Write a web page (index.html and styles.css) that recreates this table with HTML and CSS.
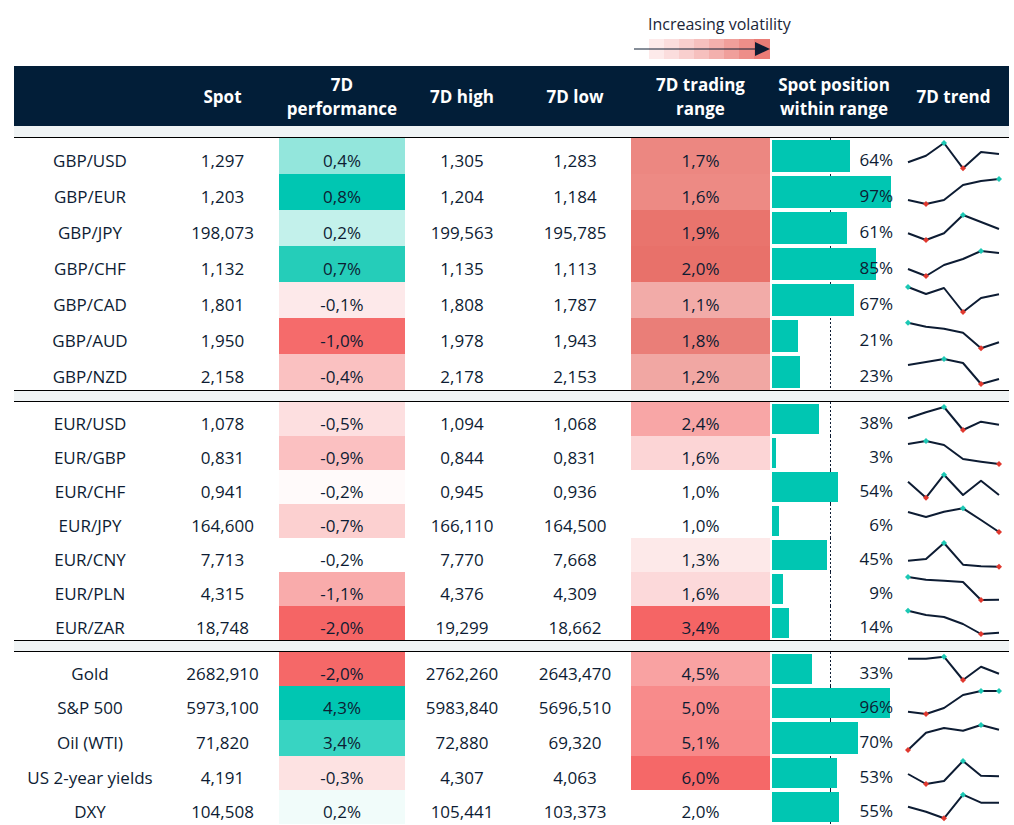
FILE: index.html
```html
<!DOCTYPE html>
<html lang="en">
<head>
<meta charset="utf-8">
<title>FX volatility monitor</title>
<link rel="stylesheet" href="styles.css">
</head>
<body>
<div class="page">
  <div class="legend">
    <div class="legend-label">Increasing volatility</div>
    <svg class="legend-arrow" width="136" height="20" viewBox="0 0 136 20">
      <rect x="15" y="0" width="15.2" height="20" fill="#fdeaea"/>
      <rect x="30" y="0" width="15.2" height="20" fill="#fbdddd"/>
      <rect x="45" y="0" width="15.2" height="20" fill="#f9cfce"/>
      <rect x="60" y="0" width="15.2" height="20" fill="#f6c0be"/>
      <rect x="75" y="0" width="15.2" height="20" fill="#f3b0ad"/>
      <rect x="90" y="0" width="15.2" height="20" fill="#f09f9b"/>
      <rect x="105" y="0" width="15.2" height="20" fill="#ed8e89"/>
      <rect x="120" y="0" width="16" height="20" fill="#ea7c76"/>
      <line x1="0" y1="10" x2="122" y2="10" stroke="#0d1c33" stroke-width="1"/>
      <polygon points="121,3 136,10 121,17" fill="#0d1c33"/>
    </svg>
  </div>

  <div class="board">
    <div class="grid head">
      <div class="hc"></div>
      <div class="hc">Spot</div>
      <div class="hc">7D<br>performance</div>
      <div class="hc">7D high</div>
      <div class="hc">7D low</div>
      <div class="hc">7D trading<br>range</div>
      <div class="hc">Spot position<br>within range</div>
      <div class="hc">7D trend</div>
    </div>
    <div class="band band-first"></div>

    <section class="group tall">
      <div class="grid row">
        <div class="c">GBP/USD</div><div class="c">1,297</div>
        <div class="c" style="background:#93e6dc">0,4%</div>
        <div class="c">1,305</div><div class="c">1,283</div>
        <div class="c" style="background:#ec8781">1,7%</div>
        <div class="pos"><div class="bar" style="width:78.3px"></div><span class="pct">64%</span></div>
        <div class="trend"><svg class="spark" viewBox="0 0 111 36"><polyline points="10,24.3 28,17.7 46,5 65,30.3 83,14 101,16"/><path class="hi" d="M46 2l3 3-3 3-3-3z"/><path class="lo" d="M65 27.3l3 3-3 3-3-3z"/></svg></div>
      </div>
      <div class="grid row">
        <div class="c">GBP/EUR</div><div class="c">1,203</div>
        <div class="c" style="background:#00c6b2">0,8%</div>
        <div class="c">1,204</div><div class="c">1,184</div>
        <div class="c" style="background:#ed8a84">1,6%</div>
        <div class="pos"><div class="bar" style="width:118.7px"></div><span class="pct">97%</span></div>
        <div class="trend"><svg class="spark" viewBox="0 0 111 36"><polyline points="10,26 28,30 46,26 65,11 83,7 101,5"/><path class="lo" d="M28 27l3 3-3 3-3-3z"/><path class="hi" d="M101 2l3 3-3 3-3-3z"/></svg></div>
      </div>
      <div class="grid row">
        <div class="c">GBP/JPY</div><div class="c">198,073</div>
        <div class="c" style="background:#c3f1eb">0,2%</div>
        <div class="c">199,563</div><div class="c">195,785</div>
        <div class="c" style="background:#e9746d">1,9%</div>
        <div class="pos"><div class="bar" style="width:74.7px"></div><span class="pct">61%</span></div>
        <div class="trend"><svg class="spark" viewBox="0 0 111 36"><polyline points="10,23.3 28,30 46,23.3 65,5 83,12 101,19"/><path class="lo" d="M28 27l3 3-3 3-3-3z"/><path class="hi" d="M65 2l3 3-3 3-3-3z"/></svg></div>
      </div>
      <div class="grid row">
        <div class="c">GBP/CHF</div><div class="c">1,132</div>
        <div class="c" style="background:#25cdb9">0,7%</div>
        <div class="c">1,135</div><div class="c">1,113</div>
        <div class="c" style="background:#e8716a">2,0%</div>
        <div class="pos"><div class="bar" style="width:104px"></div><span class="pct">85%</span></div>
        <div class="trend"><svg class="spark" viewBox="0 0 111 36"><polyline points="10,23 28,30 46,19 65,13 83,5 101,7"/><path class="lo" d="M28 27l3 3-3 3-3-3z"/><path class="hi" d="M83 2l3 3-3 3-3-3z"/></svg></div>
      </div>
      <div class="grid row">
        <div class="c">GBP/CAD</div><div class="c">1,801</div>
        <div class="c" style="background:#fde9ea">-0,1%</div>
        <div class="c">1,808</div><div class="c">1,787</div>
        <div class="c" style="background:#f2aba8">1,1%</div>
        <div class="pos"><div class="bar" style="width:82px"></div><span class="pct">67%</span></div>
        <div class="trend"><svg class="spark" viewBox="0 0 111 36"><polyline points="10,5 28,12 46,6 65,30 83,16 101,12.3"/><path class="hi" d="M10 2l3 3-3 3-3-3z"/><path class="lo" d="M65 27l3 3-3 3-3-3z"/></svg></div>
      </div>
      <div class="grid row">
        <div class="c">GBP/AUD</div><div class="c">1,950</div>
        <div class="c" style="background:#f56b6b">-1,0%</div>
        <div class="c">1,978</div><div class="c">1,943</div>
        <div class="c" style="background:#ea7e78">1,8%</div>
        <div class="pos"><div class="bar" style="width:25.7px"></div><span class="pct">21%</span></div>
        <div class="trend"><svg class="spark" viewBox="0 0 111 36"><polyline points="10,4.7 28,8.7 46,10.7 65,14.7 83,30.3 101,24.3"/><path class="hi" d="M10 1.7l3 3-3 3-3-3z"/><path class="lo" d="M83 27.3l3 3-3 3-3-3z"/></svg></div>
      </div>
      <div class="grid row">
        <div class="c">GBP/NZD</div><div class="c">2,158</div>
        <div class="c" style="background:#fac1c1">-0,4%</div>
        <div class="c">2,178</div><div class="c">2,153</div>
        <div class="c" style="background:#f1a7a3">1,2%</div>
        <div class="pos"><div class="bar" style="width:28.2px"></div><span class="pct">23%</span></div>
        <div class="trend"><svg class="spark" viewBox="0 0 111 36"><polyline points="10,11 28,8 46,5 65,9 83,30 101,25"/><path class="hi" d="M46 2l3 3-3 3-3-3z"/><path class="lo" d="M83 27l3 3-3 3-3-3z"/></svg></div>
      </div>
    </section>

    <div class="band"></div>

    <section class="group">
      <div class="grid row">
        <div class="c">EUR/USD</div><div class="c">1,078</div>
        <div class="c" style="background:#fddfe0">-0,5%</div>
        <div class="c">1,094</div><div class="c">1,068</div>
        <div class="c" style="background:#f8a6a6">2,4%</div>
        <div class="pos"><div class="bar" style="width:46.5px"></div><span class="pct">38%</span></div>
        <div class="trend"><svg class="spark" viewBox="0 0 111 34"><polyline points="10,16.3 28,10.3 46,5 65,28 83,19.7 101,22.7"/><path class="hi" d="M46 2l3 3-3 3-3-3z"/><path class="lo" d="M65 25l3 3-3 3-3-3z"/></svg></div>
      </div>
      <div class="grid row">
        <div class="c">EUR/GBP</div><div class="c">0,831</div>
        <div class="c" style="background:#fbc0c1">-0,9%</div>
        <div class="c">0,844</div><div class="c">0,831</div>
        <div class="c" style="background:#fcd5d6">1,6%</div>
        <div class="pos"><div class="bar" style="width:3.7px"></div><span class="pct">3%</span></div>
        <div class="trend"><svg class="spark" viewBox="0 0 111 34"><polyline points="10,8 28,5 46,9 65,23 83,25.7 101,28"/><path class="hi" d="M28 2l3 3-3 3-3-3z"/><path class="lo" d="M101 25l3 3-3 3-3-3z"/></svg></div>
      </div>
      <div class="grid row">
        <div class="c">EUR/CHF</div><div class="c">0,941</div>
        <div class="c" style="background:#fffafa">-0,2%</div>
        <div class="c">0,945</div><div class="c">0,936</div>
        <div class="c">1,0%</div>
        <div class="pos"><div class="bar" style="width:66.1px"></div><span class="pct">54%</span></div>
        <div class="trend"><svg class="spark" viewBox="0 0 111 34"><polyline points="10,11.7 28,27.7 46,4.7 65,25 83,10.7 101,25"/><path class="hi" d="M46 1.7l3 3-3 3-3-3z"/><path class="lo" d="M28 24.7l3 3-3 3-3-3z"/></svg></div>
      </div>
      <div class="grid row">
        <div class="c">EUR/JPY</div><div class="c">164,600</div>
        <div class="c" style="background:#fcd0d0">-0,7%</div>
        <div class="c">166,110</div><div class="c">164,500</div>
        <div class="c">1,0%</div>
        <div class="pos"><div class="bar" style="width:7.3px"></div><span class="pct">6%</span></div>
        <div class="trend"><svg class="spark" viewBox="0 0 111 34"><polyline points="10,8 28,13 46,7.7 65,4.3 83,16 101,28"/><path class="hi" d="M65 1.3l3 3-3 3-3-3z"/><path class="lo" d="M101 25l3 3-3 3-3-3z"/></svg></div>
      </div>
      <div class="grid row">
        <div class="c">EUR/CNY</div><div class="c">7,713</div>
        <div class="c">-0,2%</div>
        <div class="c">7,770</div><div class="c">7,668</div>
        <div class="c" style="background:#fde9e9">1,3%</div>
        <div class="pos"><div class="bar" style="width:55.1px"></div><span class="pct">45%</span></div>
        <div class="trend"><svg class="spark" viewBox="0 0 111 34"><polyline points="10,22.7 28,21 46,5 65,26.7 83,28.3 101,28.7"/><path class="hi" d="M46 2l3 3-3 3-3-3z"/><path class="lo" d="M101 25.7l3 3-3 3-3-3z"/></svg></div>
      </div>
      <div class="grid row">
        <div class="c">EUR/PLN</div><div class="c">4,315</div>
        <div class="c" style="background:#f9abab">-1,1%</div>
        <div class="c">4,376</div><div class="c">4,309</div>
        <div class="c" style="background:#fcd9da">1,6%</div>
        <div class="pos"><div class="bar" style="width:11px"></div><span class="pct">9%</span></div>
        <div class="trend"><svg class="spark" viewBox="0 0 111 34"><polyline points="10,5 28,7.7 46,8.7 65,10 83,28 101,27.7"/><path class="hi" d="M10 2l3 3-3 3-3-3z"/><path class="lo" d="M83 25l3 3-3 3-3-3z"/></svg></div>
      </div>
      <div class="grid row">
        <div class="c">EUR/ZAR</div><div class="c">18,748</div>
        <div class="c" style="background:#f56565">-2,0%</div>
        <div class="c">19,299</div><div class="c">18,662</div>
        <div class="c" style="background:#f56565">3,4%</div>
        <div class="pos"><div class="bar" style="width:17.1px"></div><span class="pct">14%</span></div>
        <div class="trend"><svg class="spark" viewBox="0 0 111 34"><polyline points="10,4.7 28,9 46,11 65,18 83,28 101,26.7"/><path class="hi" d="M10 1.7l3 3-3 3-3-3z"/><path class="lo" d="M83 25l3 3-3 3-3-3z"/></svg></div>
      </div>
    </section>

    <div class="band"></div>

    <section class="group last">
      <div class="grid row">
        <div class="c">Gold</div><div class="c">2682,910</div>
        <div class="c" style="background:#f56868">-2,0%</div>
        <div class="c">2762,260</div><div class="c">2643,470</div>
        <div class="c" style="background:#f9a2a2">4,5%</div>
        <div class="pos"><div class="bar" style="width:40.4px"></div><span class="pct">33%</span></div>
        <div class="trend"><svg class="spark" viewBox="0 0 111 34"><polyline points="10,6.7 28,6.7 46,4.7 65,28 83,14.7 101,21.7"/><path class="hi" d="M46 1.7l3 3-3 3-3-3z"/><path class="lo" d="M65 25l3 3-3 3-3-3z"/></svg></div>
      </div>
      <div class="grid row">
        <div class="c">S&amp;P 500</div><div class="c">5973,100</div>
        <div class="c" style="background:#00c6b2">4,3%</div>
        <div class="c">5983,840</div><div class="c">5696,510</div>
        <div class="c" style="background:#f88b8b">5,0%</div>
        <div class="pos"><div class="bar" style="width:117.5px"></div><span class="pct">96%</span></div>
        <div class="trend"><svg class="spark" viewBox="0 0 111 34"><polyline points="10,25.7 28,28 46,22 65,9 83,5 101,5"/><path class="lo" d="M28 25l3 3-3 3-3-3z"/><path class="hi" d="M83 2l3 3-3 3-3-3z"/><path class="hi" d="M101 2l3 3-3 3-3-3z"/></svg></div>
      </div>
      <div class="grid row r36">
        <div class="c">Oil (WTI)</div><div class="c">71,820</div>
        <div class="c" style="background:#38d4c2">3,4%</div>
        <div class="c">72,880</div><div class="c">69,320</div>
        <div class="c" style="background:#f88989">5,1%</div>
        <div class="pos"><div class="bar" style="width:85.7px"></div><span class="pct">70%</span></div>
        <div class="trend"><svg class="spark" viewBox="0 0 111 36"><polyline points="10,30 28,12.7 46,8 65,10.7 83,5 101,9.7"/><path class="lo" d="M10 27l3 3-3 3-3-3z"/><path class="hi" d="M83 2l3 3-3 3-3-3z"/></svg></div>
      </div>
      <div class="grid row">
        <div class="c">US 2-year yields</div><div class="c">4,191</div>
        <div class="c" style="background:#fde2e2">-0,3%</div>
        <div class="c">4,307</div><div class="c">4,063</div>
        <div class="c" style="background:#f56868">6,0%</div>
        <div class="pos"><div class="bar" style="width:64.9px"></div><span class="pct">53%</span></div>
        <div class="trend"><svg class="spark" viewBox="0 0 111 34"><polyline points="10,18 28,28 46,25 65,5 83,19.7 101,20.3"/><path class="lo" d="M28 25l3 3-3 3-3-3z"/><path class="hi" d="M65 2l3 3-3 3-3-3z"/></svg></div>
      </div>
      <div class="grid row">
        <div class="c">DXY</div><div class="c">104,508</div>
        <div class="c" style="background:#f1fcfa">0,2%</div>
        <div class="c">105,441</div><div class="c">103,373</div>
        <div class="c">2,0%</div>
        <div class="pos"><div class="bar" style="width:67.3px"></div><span class="pct">55%</span></div>
        <div class="trend"><svg class="spark" viewBox="0 0 111 34"><polyline points="10,16.7 28,21.7 46,28.3 65,4.7 83,12.7 101,12.7"/><path class="lo" d="M46 25.3l3 3-3 3-3-3z"/><path class="hi" d="M65 1.7l3 3-3 3-3-3z"/></svg></div>
      </div>
    </section>
  </div>
</div>
</body>
</html>
```

FILE: styles.css
```css
html, body {
  margin: 0;
  padding: 0;
  background: #ffffff;
}

body {
  font-family: "Open Sans", "Noto Sans", sans-serif;
  color: #0d1c33;
  font-size: 17px;
}

.page {
  width: 995px;
  margin-left: 14px;
}

.legend {
  height: 66px;
  box-sizing: border-box;
  padding-top: 14px;
  padding-left: 620px;
  display: flex;
  flex-direction: column;
  align-items: flex-start;
}

.legend-label {
  margin-left: 14px;
  font-size: 16px;
  line-height: 20px;
  color: #1a2638;
}

.legend-arrow {
  display: block;
  margin-top: 5px;
}

.grid {
  display: grid;
  grid-template-columns: 152px 113px 126px 114px 112px 139px 128px 111px;
}

.head {
  height: 60px;
  box-sizing: border-box;
  padding-top: 2px;
  background: #021e38;
  color: #ffffff;
  font-weight: 700;
  font-size: 17px;
  line-height: 24px;
}

.hc {
  display: flex;
  align-items: center;
  justify-content: center;
  text-align: center;
}

.band {
  height: 10px;
  background: #f0f4f5;
}

.band-first {
  height: 11px;
}

.group {
  border-top: 1px solid #000000;
  border-bottom: 1px solid #000000;
}

.group.last {
  border-bottom: none;
}

.row {
  height: 34px;
}

.tall .row,
.row.r36 {
  height: 36px;
}

.c {
  display: flex;
  align-items: center;
  justify-content: center;
  box-sizing: border-box;
  padding-top: 8px;
  white-space: nowrap;
}

.pos {
  display: grid;
  grid-template-columns: 1fr;
  grid-template-rows: 1fr;
  box-sizing: border-box;
  padding: 2px 0 2px 2px;
  background-image: linear-gradient(to bottom, #0d1c33 50%, transparent 50%);
  background-size: 1px 4px;
  background-position: 60px 0;
  background-repeat: repeat-y;
}

.bar {
  grid-area: 1 / 1;
  justify-self: start;
  height: 100%;
  background: #00c6b2;
}

.pct {
  grid-area: 1 / 1;
  justify-self: end;
  align-self: center;
  margin-right: 5px;
  padding-top: 6px;
  position: relative;
}

.trend {
  display: block;
}

.spark {
  display: block;
  width: 111px;
  height: 100%;
  overflow: visible;
}

.spark polyline {
  fill: none;
  stroke: #0d1c33;
  stroke-width: 2;
  stroke-linejoin: round;
}

.spark .hi {
  fill: #1cc8b4;
}

.spark .lo {
  fill: #e0382e;
}
```
